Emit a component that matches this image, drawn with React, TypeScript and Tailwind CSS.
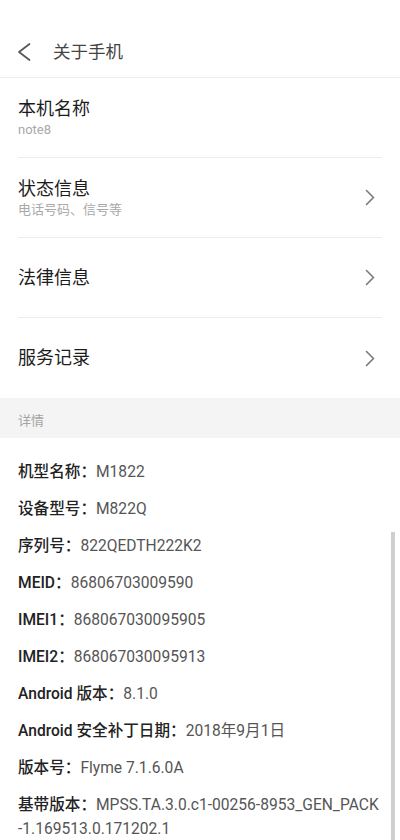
const font = { fontFamily: 'Roboto, "Noto Sans CJK SC", sans-serif' };

const menu = [
  { title: "本机名称", sub: "note8", arrow: false },
  { title: "状态信息", sub: "电话号码、信号等", arrow: true },
  { title: "法律信息", arrow: true },
  { title: "服务记录", arrow: true },
];

const details: [string, string][] = [
  ["机型名称：", "M1822"],
  ["设备型号：", "M822Q"],
  ["序列号：", "822QEDTH222K2"],
  ["MEID：", "86806703009590"],
  ["IMEI1：", "868067030095905"],
  ["IMEI2：", "868067030095913"],
  ["Android 版本：", "8.1.0"],
  ["Android 安全补丁日期：", "2018年9月1日"],
  ["版本号：", "Flyme 7.1.6.0A"],
];

function Back() {
  return (
    <svg width="14" height="20" viewBox="0 0 14 20" className="ml-[17px]">
      <polyline points="12.5,2 2,10 12.5,18" fill="none" stroke="#555" strokeWidth="1.7" strokeLinecap="round" strokeLinejoin="round" />
    </svg>
  );
}

function Arrow() {
  return (
    <svg width="10" height="17" viewBox="0 0 10 17" className="mr-[7px]">
      <polyline points="1.5,1.5 8.5,8.5 1.5,15.5" fill="none" stroke="#7a7a7a" strokeWidth="1.6" strokeLinecap="round" strokeLinejoin="round" />
    </svg>
  );
}

export default function App() {
  return (
    <div className="relative w-[400px] h-[840px] overflow-hidden bg-white" style={font}>
      {/* header */}
      <div className="h-[78px] flex items-center pt-[26px] border-b border-[#ececec]">
        <Back />
        <span className="ml-[22px] text-[17.5px] leading-[24px] text-[#444]">关于手机</span>
      </div>

      {menu.map((m, i) => (
        <div key={m.title} className={"mx-[18px] h-[80px] flex items-center justify-between " + (i < menu.length - 1 ? "border-b border-[#ececec]" : "")}>
          <div className="flex flex-col">
            <span className="text-[18px] leading-[24px] text-[#1c1c1c]">{m.title}</span>
            {m.sub && <span className="text-[13px] leading-[18px] text-[#a8a8a8]">{m.sub}</span>}
          </div>
          {m.arrow && <Arrow />}
        </div>
      ))}

      {/* section */}
      <div className="h-[40px] bg-[#f4f4f4] flex items-center pt-[5px] px-[18px]">
        <span className="text-[13px] leading-[18px] text-[#a5a5a5]">详情</span>
      </div>

      <div className="px-[18px] pt-[22px] flex flex-col gap-[13px] text-[15.6px] leading-[24px]">
        {details.map(([k, v]) => (
          <div key={k}>
            <span className="font-medium text-[#222]">{k}</span>
            <span className="text-[#555]">{v}</span>
          </div>
        ))}
        <div>
          <span className="font-medium text-[#222]">基带版本：</span>
          <span className="text-[#555]">MPSS.TA.3.0.c1-00256-8953_GEN_PACK</span>
          <br />
          <span className="text-[#555]">-1.169513.0.171202.1</span>
        </div>
      </div>

      {/* scrollbar */}
      <div className="absolute left-[391px] top-[532px] w-[4px] h-[308px] bg-[#cfcfcf]" />
    </div>
  );
}
